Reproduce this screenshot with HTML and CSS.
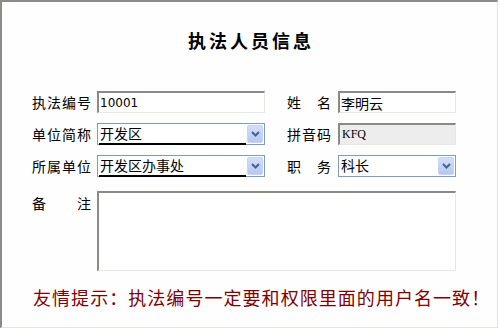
FILE: index.html
```html
<!DOCTYPE html>
<html>
<head>
<meta charset="utf-8">
<link rel="stylesheet" href="styles.css">
</head>
<body>
<div class="frame">
  <h1 class="title">执法人员信息</h1>
  <div class="form">
    <span class="lbl">执法编号</span>
    <div class="field input"><span class="num">10001</span></div>
    <span class="lbl lbl-r">姓　名</span>
    <div class="field input"><span class="cjk">李明云</span></div>

    <span class="lbl">单位简称</span>
    <div class="field select"><span class="sel-text">开发区</span><span class="btn"><svg width="9" height="6" viewBox="0 0 9 6"><polyline points="1,1 4.5,4.5 8,1" fill="none" stroke="#4d6185" stroke-width="2"/></svg></span></div>
    <span class="lbl lbl-r">拼音码</span>
    <div class="field input readonly"><span class="mono">KFQ</span></div>

    <span class="lbl">所属单位</span>
    <div class="field select"><span class="sel-text">开发区办事处</span><span class="btn"><svg width="9" height="6" viewBox="0 0 9 6"><polyline points="1,1 4.5,4.5 8,1" fill="none" stroke="#4d6185" stroke-width="2"/></svg></span></div>
    <span class="lbl lbl-r">职　务</span>
    <div class="field select plain"><span class="sel-text">科长</span><span class="btn"><svg width="9" height="6" viewBox="0 0 9 6"><polyline points="1,1 4.5,4.5 8,1" fill="none" stroke="#4d6185" stroke-width="2"/></svg></span></div>

    <span class="lbl lbl-spread"><span>备</span><span>注</span></span>
    <div class="field textarea"></div>
  </div>
  <p class="hint">友情提示：执法编号一定要和权限里面的用户名一致！</p>
</div>
</body>
</html>
```

FILE: styles.css
```css
html, body {
  margin: 0;
  padding: 0;
  background: #ffffff;
}

body {
  font-family: "Noto Sans CJK SC", "DejaVu Sans", sans-serif;
  color: #000;
}

.frame {
  box-sizing: border-box;
  width: 498px;
  height: 328px;
  border-top: 2px solid #8c8c86;
  border-left: 2px solid #8c8c86;
  border-right: 1px solid #e4e4de;
  border-bottom: 1px solid #e4e4de;
  background: #fefefe;
  padding-top: 26px;
}

.title {
  margin: 0;
  font-size: 18px;
  line-height: 24px;
  font-weight: bold;
  text-align: center;
  letter-spacing: 3px;
  padding-left: 3px;
}

.form {
  margin-top: 39px;
  padding-left: 30px;
  display: grid;
  grid-template-columns: 65px 168px 73px 118px;
  grid-template-rows: 22px 22px 22px 84px;
  row-gap: 10px;
  align-items: center;
}

.lbl {
  font-size: 14px;
  line-height: 20px;
  letter-spacing: 1px;
  white-space: nowrap;
}

.lbl-r {
  padding-left: 22px;
}

.lbl-spread {
  display: flex;
  justify-content: space-between;
  width: 59px;
  letter-spacing: 0;
  align-self: start;
  padding-top: 6px;
}

.field {
  box-sizing: border-box;
  height: 22px;
  display: flex;
  align-items: center;
  background: #fff;
}

.input {
  border-top: 2px solid #8a8a84;
  border-left: 2px solid #8a8a84;
  border-right: 1px solid #e8e8e2;
  border-bottom: 1px solid #e8e8e2;
  padding-left: 1px;
}

.readonly {
  background: #ededed;
}

.num {
  font-family: "DejaVu Sans", sans-serif;
  font-size: 12px;
}

.cjk {
  font-size: 14px;
}

.mono {
  font-family: "Liberation Serif", serif;
  font-size: 12px;
  padding-left: 1px;
}

.select {
  border: 1px solid #7f9db9;
  padding: 1px;
}

.sel-text {
  flex: 1;
  align-self: stretch;
  font-size: 14px;
  line-height: 17px;
  padding-left: 1px;
  border-bottom: 2px solid #000;
  margin-right: 1px;
  box-sizing: border-box;
  height: 20px;
}

.plain .sel-text {
  border-bottom: none;
}

.btn {
  box-sizing: border-box;
  width: 16px;
  height: 18px;
  display: flex;
  align-items: center;
  justify-content: center;
  background: linear-gradient(#d2defb, #b5c8f5);
  border: 1px solid #c3d3fb;
  border-radius: 2px;
}

.textarea {
  grid-column: 2 / 5;
  height: 80px;
  margin-top: 4px;
  align-self: start;
  border-top: 2px solid #8a8a84;
  border-left: 2px solid #8a8a84;
  border-right: 1px solid #e8e8e2;
  border-bottom: 1px solid #e8e8e2;
}

.hint {
  margin: 14px 0 0 31px;
  font-size: 18px;
  line-height: 24px;
  color: #800000;
  letter-spacing: 1.05px;
  white-space: nowrap;
}
```
